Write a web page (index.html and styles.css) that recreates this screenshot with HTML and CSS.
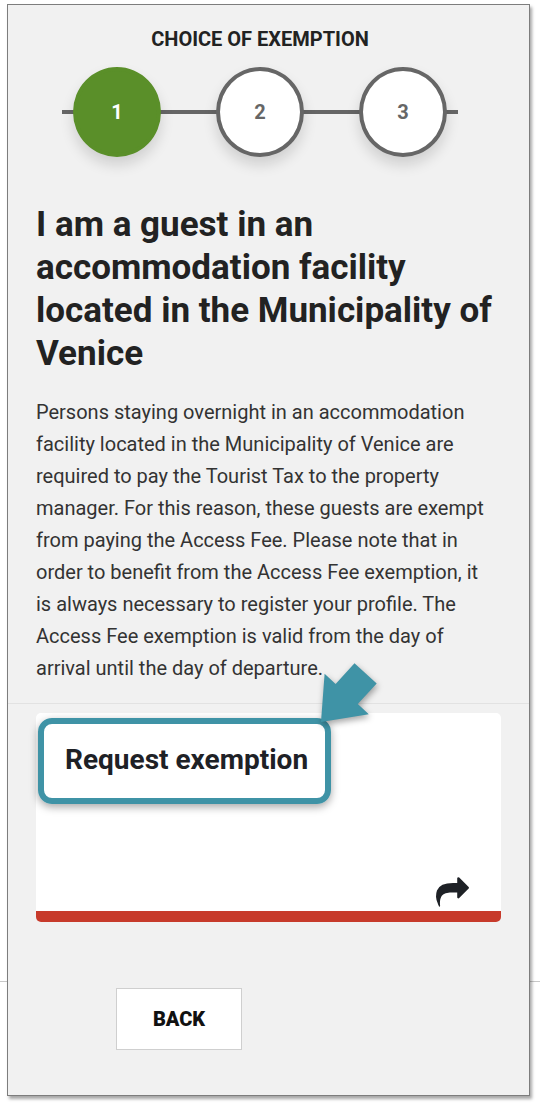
FILE: index.html
```html
<!DOCTYPE html>
<html lang="en">
<head>
<meta charset="utf-8">
<title>Choice of exemption</title>
<link rel="stylesheet" href="styles.css">
</head>
<body>
<div class="frame">
  <div class="header">
    <div class="step-title">CHOICE OF EXEMPTION</div>
    <div class="stepper">
      <div class="step active">1</div>
      <div class="step">2</div>
      <div class="step">3</div>
    </div>
  </div>
  <div class="content">
    <h1 class="heading">I am a guest in an<br>accommodation facility<br>located in the Municipality of<br>Venice</h1>
    <p class="text">Persons staying overnight in an accommodation<br>facility located in the Municipality of Venice are<br>required to pay the Tourist Tax to the property<br>manager. For this reason, these guests are exempt<br>from paying the Access Fee. Please note that in<br>order to benefit from the Access Fee exemption, it<br>is always necessary to register your profile. The<br>Access Fee exemption is valid from the day of<br>arrival until the day of departure.</p>
  </div>
  <div class="options">
    <div class="card">
      <div class="card-title">Request exemption</div>
      <div class="card-foot">
        <svg class="share" viewBox="0 0 1792 1792" width="33" height="33" aria-hidden="true"><path d="M1792 640q0 26-19 45l-512 512q-19 19-45 19t-45-19-19-45v-256h-224q-98 0-175.5 6t-154 21.5-133 42.5-105.5 69.5-80 101-48.5 138.5-17.5 181q0 55 5 123 0 6 2.5 23.5t2.5 26.5q0 15-8.5 25t-23.5 10q-16 0-28-17-7-9-13-22t-13.5-30-10.5-24q-127-285-127-451 0-199 53-333 162-403 875-403h224v-256q0-26 19-45t45-19 45 19l512 512q19 19 19 45z" fill="#1e2126"/></svg>
      </div>
      <div class="card-bar"></div>
      <div class="highlight"></div>
      <svg class="pointer" viewBox="0 0 70 75" width="70" height="75" aria-hidden="true"><polygon points="39.5,8.3 61.7,28.5 42.8,49.1 53.8,59.3 6,67 9.6,18.7 20.6,28.9" fill="#3f93a6"/></svg>
    </div>
    <div class="actions">
      <button class="back">BACK</button>
    </div>
  </div>
</div>
</body>
</html>
```

FILE: styles.css
```css
html, body {
  margin: 0;
  padding: 0;
}
body {
  width: 540px;
  height: 1108px;
  overflow: hidden;
  background: linear-gradient(#c8c8c8, #c8c8c8) 0 981px / 100% 1px no-repeat, #ffffff;
  font-family: Roboto, "Noto Sans", sans-serif;
  color: #222;
}
.frame {
  position: relative;
  margin: 4px 0 0 7px;
  width: 521px;
  height: 1090px;
  background: #f1f1f1;
  border: 1px solid #7d7d7d;
  box-shadow: 2px 3px 3px rgba(0, 0, 0, 0.35);
}
.header {
  width: 504px;
  padding-top: 22px;
}
.step-title {
  text-align: center;
  font-weight: 700;
  font-size: 20px;
  line-height: 24px;
  color: #222;
}
.stepper {
  margin: 16px auto 0;
  width: 396px;
  padding: 0 11px;
  box-sizing: border-box;
  display: flex;
  justify-content: space-between;
  align-items: center;
  background: linear-gradient(#666, #666) center / 100% 4px no-repeat;
}
.step {
  width: 88px;
  height: 90px;
  box-sizing: border-box;
  border-radius: 50%;
  border: 4px solid #666;
  background: #fff;
  display: flex;
  align-items: center;
  justify-content: center;
  font-weight: 700;
  font-size: 20px;
  color: #666;
  box-shadow: 0 8px 14px rgba(0, 0, 0, 0.14);
}
.step.active {
  background: #5a8f29;
  border-color: #5a8f29;
  color: #fff;
}
.content {
  padding: 0 28px;
}
.heading {
  margin: 46px 0 0;
  font-size: 35px;
  line-height: 43px;
  font-weight: 700;
  color: #222;
}
.text {
  margin: 21px 0 0;
  font-size: 20px;
  line-height: 32px;
  color: #333;
  padding-bottom: 19px;
}
.options {
  border-top: 1px solid #e2e2e2;
  padding: 9px 28px 0;
}
.card {
  position: relative;
  background: #fff;
  border-radius: 5px;
  height: 209px;
  display: flex;
  flex-direction: column;
}
.card-title {
  padding: 31px 0 0 29px;
  font-size: 28px;
  line-height: 32px;
  font-weight: 700;
  color: #1e2126;
}
.card-foot {
  flex: 1;
  display: flex;
  justify-content: flex-end;
  align-items: flex-end;
  padding: 0 32px 2px 0;
}
.share {
  display: block;
}
.card-bar {
  height: 11px;
  background: #c73a2b;
  border-radius: 0 0 5px 5px;
}
.highlight {
  position: absolute;
  left: 2px;
  top: 5px;
  width: 293px;
  height: 86px;
  box-sizing: border-box;
  border: 6px solid #3f93a6;
  border-radius: 14px;
  box-shadow: 0 3px 8px rgba(0, 0, 0, 0.35);
}
.pointer {
  position: absolute;
  left: 279px;
  top: -58px;
  filter: drop-shadow(1px 3px 3px rgba(0, 0, 0, 0.35));
}
.actions {
  padding: 66px 0 0 80px;
}
.back {
  width: 126px;
  height: 62px;
  background: #fff;
  border: 1px solid #cfcfcf;
  font-family: Roboto, "Noto Sans", sans-serif;
  font-weight: 900;
  font-size: 20px;
  color: #111;
  padding: 0;
}
```
